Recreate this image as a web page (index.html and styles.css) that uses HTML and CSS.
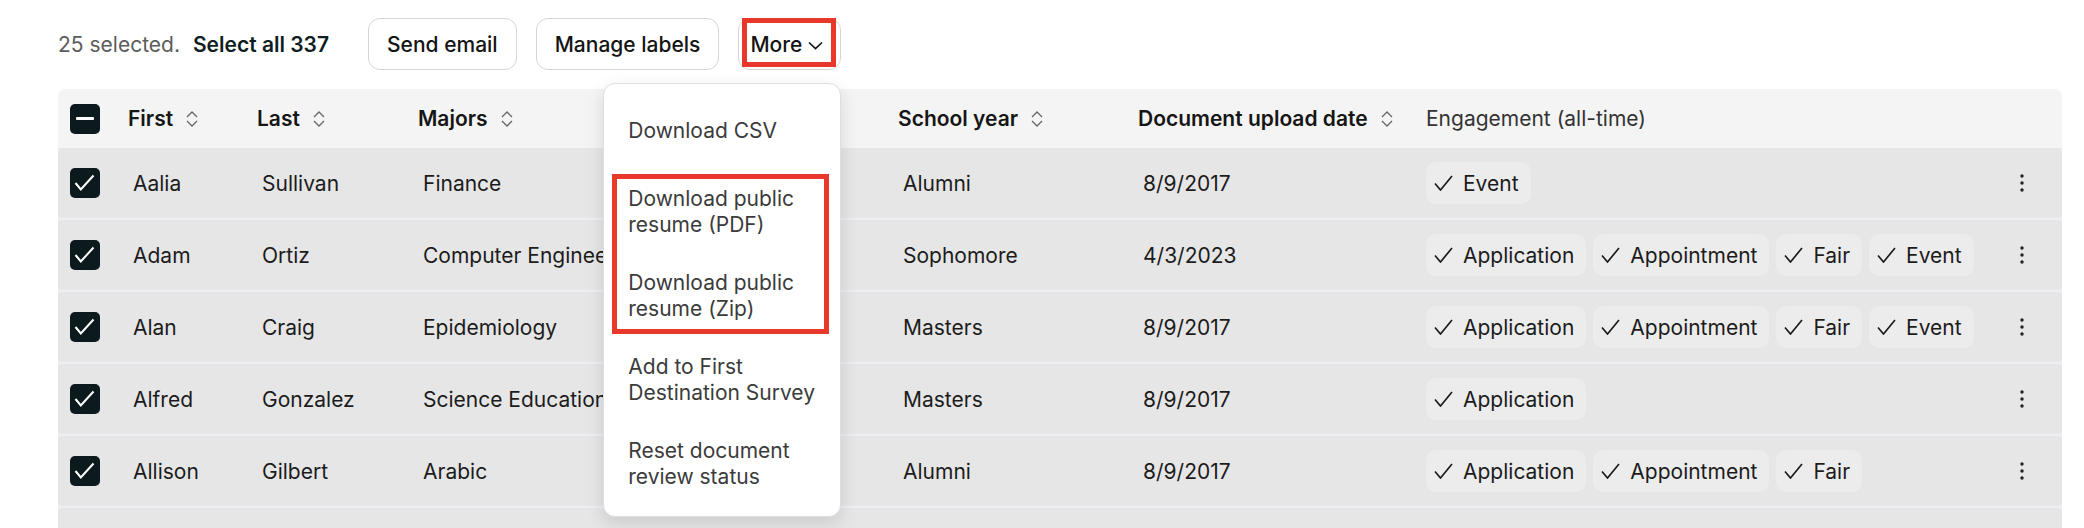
FILE: index.html
```html
<!DOCTYPE html>
<html lang="en">
<head>
    <meta charset="UTF-8">
    <meta name="viewport" content="width=device-width, initial-scale=1.0">
    <title>Students</title>
    <link rel="stylesheet" href="styles.css">
</head>
<body>
    <div class="page">
        <div class="toolbar">
            <span class="count">25 selected.</span>
            <a class="select-all">Select all 337</a>
            <button class="btn">Send email</button>
            <button class="btn">Manage labels</button>
            <div class="more-wrap">
                <button class="btn btn-more">More
                    <svg width="15" height="9" viewBox="0 0 15 9"><polyline points="1,1.5 7.5,7.5 14,1.5" fill="none" stroke="#111" stroke-width="1.7"/></svg>
                </button>
                <div class="menu">
                    <div class="menu-item first">Download CSV</div>
                    <div class="menu-group">
                        <div class="menu-item">Download public resume (PDF)</div>
                        <div class="menu-item">Download public resume (Zip)</div>
                    </div>
                    <div class="menu-item">Add to First Destination Survey</div>
                    <div class="menu-item">Reset document review status</div>
                </div>
            </div>
        </div>

        <div class="table">
            <div class="row head">
                <div class="cb-cell"><span class="checkbox"><span class="dash"></span></span></div>
                <div class="th">First <svg class="sort" width="14" height="18" viewBox="0 0 14 18"><polyline points="2,7 7,2 12,7" /><polyline points="2,11 7,16 12,11" /></svg></div>
                <div class="th">Last <svg class="sort" width="14" height="18" viewBox="0 0 14 18"><polyline points="2,7 7,2 12,7" /><polyline points="2,11 7,16 12,11" /></svg></div>
                <div class="th">Majors <svg class="sort" width="14" height="18" viewBox="0 0 14 18"><polyline points="2,7 7,2 12,7" /><polyline points="2,11 7,16 12,11" /></svg></div>
                <div class="th">School year <svg class="sort" width="14" height="18" viewBox="0 0 14 18"><polyline points="2,7 7,2 12,7" /><polyline points="2,11 7,16 12,11" /></svg></div>
                <div class="th">Document upload date <svg class="sort" width="14" height="18" viewBox="0 0 14 18"><polyline points="2,7 7,2 12,7" /><polyline points="2,11 7,16 12,11" /></svg></div>
                <div class="th plain">Engagement (all-time)</div>
                <div></div>
            </div>

            <div class="tbody">
                <div class="row">
                    <div class="cb-cell"><span class="checkbox"><svg width="30" height="30" viewBox="0 0 30 30"><polyline points="5.5,15 10.8,21.5 23.5,7.5" fill="none" stroke="#fff" stroke-width="2"/></svg></span></div>
                    <div class="td">Aalia</div>
                    <div class="td">Sullivan</div>
                    <div class="td">Finance</div>
                    <div class="td">Alumni</div>
                    <div class="td">8/9/2017</div>
                    <div class="chips">
                        <span class="chip"><svg width="19" height="16" viewBox="0 0 19 16"><polyline points="1,8.5 6.5,15 18,1"/></svg>Event</span>
                    </div>
                    <div class="kebab"><svg width="4" height="18" viewBox="0 0 4 18"><circle cx="2" cy="2" r="1.7"/><circle cx="2" cy="9" r="1.7"/><circle cx="2" cy="16" r="1.7"/></svg></div>
                </div>

                <div class="row">
                    <div class="cb-cell"><span class="checkbox"><svg width="30" height="30" viewBox="0 0 30 30"><polyline points="5.5,15 10.8,21.5 23.5,7.5" fill="none" stroke="#fff" stroke-width="2"/></svg></span></div>
                    <div class="td">Adam</div>
                    <div class="td">Ortiz</div>
                    <div class="td">Computer Engineering</div>
                    <div class="td">Sophomore</div>
                    <div class="td">4/3/2023</div>
                    <div class="chips">
                        <span class="chip"><svg width="19" height="16" viewBox="0 0 19 16"><polyline points="1,8.5 6.5,15 18,1"/></svg>Application</span>
                        <span class="chip"><svg width="19" height="16" viewBox="0 0 19 16"><polyline points="1,8.5 6.5,15 18,1"/></svg>Appointment</span>
                        <span class="chip"><svg width="19" height="16" viewBox="0 0 19 16"><polyline points="1,8.5 6.5,15 18,1"/></svg>Fair</span>
                        <span class="chip"><svg width="19" height="16" viewBox="0 0 19 16"><polyline points="1,8.5 6.5,15 18,1"/></svg>Event</span>
                    </div>
                    <div class="kebab"><svg width="4" height="18" viewBox="0 0 4 18"><circle cx="2" cy="2" r="1.7"/><circle cx="2" cy="9" r="1.7"/><circle cx="2" cy="16" r="1.7"/></svg></div>
                </div>

                <div class="row">
                    <div class="cb-cell"><span class="checkbox"><svg width="30" height="30" viewBox="0 0 30 30"><polyline points="5.5,15 10.8,21.5 23.5,7.5" fill="none" stroke="#fff" stroke-width="2"/></svg></span></div>
                    <div class="td">Alan</div>
                    <div class="td">Craig</div>
                    <div class="td">Epidemiology</div>
                    <div class="td">Masters</div>
                    <div class="td">8/9/2017</div>
                    <div class="chips">
                        <span class="chip"><svg width="19" height="16" viewBox="0 0 19 16"><polyline points="1,8.5 6.5,15 18,1"/></svg>Application</span>
                        <span class="chip"><svg width="19" height="16" viewBox="0 0 19 16"><polyline points="1,8.5 6.5,15 18,1"/></svg>Appointment</span>
                        <span class="chip"><svg width="19" height="16" viewBox="0 0 19 16"><polyline points="1,8.5 6.5,15 18,1"/></svg>Fair</span>
                        <span class="chip"><svg width="19" height="16" viewBox="0 0 19 16"><polyline points="1,8.5 6.5,15 18,1"/></svg>Event</span>
                    </div>
                    <div class="kebab"><svg width="4" height="18" viewBox="0 0 4 18"><circle cx="2" cy="2" r="1.7"/><circle cx="2" cy="9" r="1.7"/><circle cx="2" cy="16" r="1.7"/></svg></div>
                </div>

                <div class="row">
                    <div class="cb-cell"><span class="checkbox"><svg width="30" height="30" viewBox="0 0 30 30"><polyline points="5.5,15 10.8,21.5 23.5,7.5" fill="none" stroke="#fff" stroke-width="2"/></svg></span></div>
                    <div class="td">Alfred</div>
                    <div class="td">Gonzalez</div>
                    <div class="td">Science Education</div>
                    <div class="td">Masters</div>
                    <div class="td">8/9/2017</div>
                    <div class="chips">
                        <span class="chip"><svg width="19" height="16" viewBox="0 0 19 16"><polyline points="1,8.5 6.5,15 18,1"/></svg>Application</span>
                    </div>
                    <div class="kebab"><svg width="4" height="18" viewBox="0 0 4 18"><circle cx="2" cy="2" r="1.7"/><circle cx="2" cy="9" r="1.7"/><circle cx="2" cy="16" r="1.7"/></svg></div>
                </div>

                <div class="row">
                    <div class="cb-cell"><span class="checkbox"><svg width="30" height="30" viewBox="0 0 30 30"><polyline points="5.5,15 10.8,21.5 23.5,7.5" fill="none" stroke="#fff" stroke-width="2"/></svg></span></div>
                    <div class="td">Allison</div>
                    <div class="td">Gilbert</div>
                    <div class="td">Arabic</div>
                    <div class="td">Alumni</div>
                    <div class="td">8/9/2017</div>
                    <div class="chips">
                        <span class="chip"><svg width="19" height="16" viewBox="0 0 19 16"><polyline points="1,8.5 6.5,15 18,1"/></svg>Application</span>
                        <span class="chip"><svg width="19" height="16" viewBox="0 0 19 16"><polyline points="1,8.5 6.5,15 18,1"/></svg>Appointment</span>
                        <span class="chip"><svg width="19" height="16" viewBox="0 0 19 16"><polyline points="1,8.5 6.5,15 18,1"/></svg>Fair</span>
                    </div>
                    <div class="kebab"><svg width="4" height="18" viewBox="0 0 4 18"><circle cx="2" cy="2" r="1.7"/><circle cx="2" cy="9" r="1.7"/><circle cx="2" cy="16" r="1.7"/></svg></div>
                </div>

                <!-- next row starts just below the fold -->
                <div class="row"></div>
            </div>
        </div>
    </div>
</body>
</html>
```

FILE: styles.css
```css
html, body {
    margin: 0;
    padding: 0;
    overflow: hidden;
}

body {
    font-family: Inter, "Liberation Sans", Arial, sans-serif;
    font-size: 21px;
    color: #1c1c1c;
    background-color: #fff;
}

.page {
    padding: 18px 22px 0 58px;
}

/* toolbar */

.toolbar {
    display: flex;
    align-items: center;
    height: 52px;
}

.count {
    color: #5c5c5c;
}

.select-all {
    margin-left: 13px;
    margin-right: 39px;
    font-weight: 600;
    color: #0f1e22;
}

.btn {
    height: 52px;
    padding: 0 18px;
    margin-right: 19px;
    background-color: #fff;
    border: 1px solid #d6d6d6;
    border-radius: 12px;
    font-family: inherit;
    font-size: 21px;
    font-weight: 500;
    color: #141414;
    cursor: pointer;
}

.more-wrap {
    position: relative;
}

.btn-more {
    position: relative;
    display: flex;
    align-items: center;
    gap: 6px;
    margin-right: 0;
    padding: 0 17px 0 11px;
}

.btn-more svg {
    margin-top: 2px;
}

/* red annotation box */
.btn-more::after {
    content: "";
    position: absolute;
    top: -1px;
    right: 4px;
    bottom: 2px;
    left: 3px;
    border: 5px solid #e8382b;
}

/* dropdown */

.menu {
    position: absolute;
    top: calc(100% + 13px);
    right: 0;
    z-index: 10;
    width: 238px;
    box-sizing: border-box;
    padding: 8px 0 10px 0;
    background-color: #fff;
    border: 1px solid #dedede;
    border-radius: 12px;
    box-shadow: 0 6px 18px rgba(0, 0, 0, 0.12);
}

.menu-item {
    padding: 16px 14px 16px 24px;
    line-height: 26px;
    color: #3b3b3b;
}

.menu-item.first {
    padding-top: 26px;
    padding-bottom: 26px;
}

.menu-group {
    position: relative;
}

.menu-group::after {
    content: "";
    position: absolute;
    top: 4px;
    right: 11px;
    bottom: 4px;
    left: 8px;
    border: 5px solid #e8382b;
}

/* table */

.table {
    margin-top: 19px;
}

.row {
    display: grid;
    grid-template-columns: 70px 129px 161px 480px 240px 288px 1fr 80px;
    align-items: center;
    height: 70px;
    margin-bottom: 2px;
    background-color: #e6e6e6;
    border-radius: 4px;
}

.row.head {
    height: 59px;
    margin-bottom: 0;
    background-color: #f4f4f4;
    border-radius: 8px 8px 0 0;
}

.tbody {
    background-color: #eeeef4;
}

.cb-cell {
    padding-left: 12px;
}

.checkbox {
    display: flex;
    align-items: center;
    justify-content: center;
    width: 30px;
    height: 30px;
    background-color: #0c1a1d;
    border-radius: 5px;
}

.dash {
    width: 18px;
    height: 3px;
    background-color: #fff;
    border-radius: 1px;
}

.th {
    display: flex;
    align-items: center;
    gap: 12px;
    font-weight: 600;
    color: #161616;
    white-space: nowrap;
}

.th.plain {
    font-weight: 400;
    color: #333;
}

.sort polyline {
    fill: none;
    stroke: #666;
    stroke-width: 1.3;
}

.td {
    padding-left: 5px;
    white-space: nowrap;
}

.chips {
    display: flex;
    gap: 7px;
    white-space: nowrap;
}

.chip {
    display: inline-flex;
    align-items: center;
    gap: 10px;
    height: 42px;
    padding: 0 12px 0 8px;
    background-color: #ececec;
    border-radius: 10px;
}

.chip polyline {
    fill: none;
    stroke: #1c1c1c;
    stroke-width: 1.7;
}

.kebab {
    display: flex;
    justify-content: center;
}

.kebab circle {
    fill: #222;
}
```
